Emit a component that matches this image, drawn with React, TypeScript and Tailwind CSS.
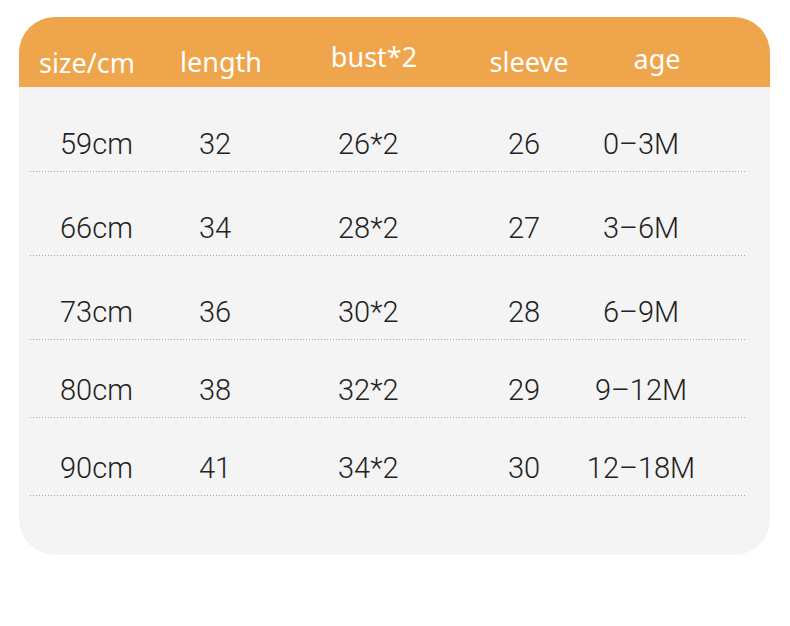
const headers = [
  { label: 'size/cm', pt: 'pt-[28px]' },
  { label: 'length', pt: 'pt-[27px]' },
  { label: 'bust*2', pt: 'pt-[22px]' },
  { label: 'sleeve', pt: 'pt-[27px]' },
  { label: 'age', pt: 'pt-[24px]' },
];

const rows = [
  { size: '59cm', length: '32', bust: '26*2', sleeve: '26', age: '0–3M', h: 'h-[84px]' },
  { size: '66cm', length: '34', bust: '28*2', sleeve: '27', age: '3–6M', h: 'h-[83px]' },
  { size: '73cm', length: '36', bust: '30*2', sleeve: '28', age: '6–9M', h: 'h-[83px]' },
  { size: '80cm', length: '38', bust: '32*2', sleeve: '29', age: '9–12M', h: 'h-[77px]' },
  { size: '90cm', length: '41', bust: '34*2', sleeve: '30', age: '12–18M', h: 'h-[77px]' },
];

const App = () => {
  return (
    <div className="h-[626px] w-[790px] bg-white pt-[17px] pl-[19px]">
      <div className="w-[751px] overflow-hidden rounded-[36px] bg-[#f4f4f4] pb-[59px]">
        <div className="grid h-[70px] grid-cols-[136px_132px_174px_136px_120px] bg-[#efa54b] font-['Noto_Sans',sans-serif] text-[27px] leading-[36px] text-white">
          {headers.map((h) => (
            <div key={h.label} className={`text-center ${h.pt}`}>
              {h.label}
            </div>
          ))}
        </div>
        {rows.map((r) => (
          <div key={r.size}>
            <div
              className={`grid grid-cols-[139px_139px_170px_71px_124px] items-end pb-[10px] pl-[41px] font-['Roboto',sans-serif] text-[29px] leading-[34px] font-light text-[#222] ${r.h}`}
            >
              <div>{r.size}</div>
              <div>{r.length}</div>
              <div>{r.bust}</div>
              <div>{r.sleeve}</div>
              <div className="text-center">{r.age}</div>
            </div>
            <div className="mr-[24px] ml-[11px] h-px bg-[repeating-linear-gradient(90deg,#a8a8a8_0_1px,transparent_1px_3px)]" />
          </div>
        ))}
      </div>
    </div>
  );
};

export default App;
